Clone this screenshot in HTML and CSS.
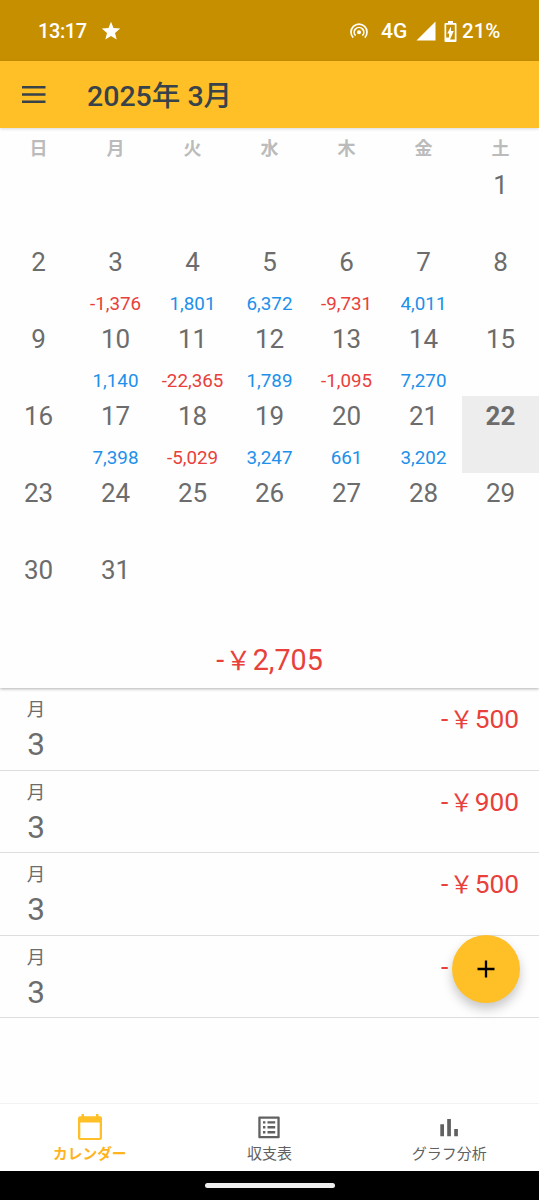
FILE: index.html
```html
<!DOCTYPE html>
<html lang="ja">
<head>
<meta charset="utf-8">
<title>カレンダー</title>
<link rel="stylesheet" href="styles.css">
</head>
<body>
<div class="app">
  <div class="status">
    <span class="clock">13:17</span>
    <svg class="star" viewBox="0 0 20 20"><path d="M10 .8l2.500 6.300 6.700.5-5.200 4.300 1.700 6.700-5.700-3.700-5.700 3.700L6 11.900.8 7.600l6.700-.5z"/></svg>
    <span class="spacer"></span>
    <svg class="hotspot" viewBox="0 0 18 16"><g fill="none" stroke="#fff" stroke-width="1.700"><path d="M3.200 14.600A8 8 0 1 1 14.800 14.600"/><path d="M5.600 12.700A4.800 4.800 0 1 1 12.400 12.700"/></g><circle cx="9" cy="9.200" r="2" fill="#fff"/></svg>
    <span class="network">4G</span>
    <svg class="signal" viewBox="0 0 20 20"><path d="M19.500.5v19H.5z"/></svg>
    <svg class="battery" viewBox="0 0 13 21"><path fill-rule="evenodd" d="M4 0h5v2h2.500q1 0 1 1v17q0 1-1 1h-10q-1 0-1-1V3q0-1 1-1H4zM2.200 3.800v12.700h2.800V12.500H3.200L7 5.500V10h2.800L6 18.500h4.800V3.800z"/></svg>
    <span class="percent">21%</span>
  </div>
  <header class="bar">
    <svg class="menu" viewBox="0 0 24 17"><path d="M0 1.300h23.500M0 8.500h23.500M0 15.700h23.500" stroke="#37424a" stroke-width="2.400"/></svg>
    <h1 class="title">2025年 3月</h1>
  </header>
  <main class="calendar">
    <div class="weekdays"><span>日</span><span>月</span><span>火</span><span>水</span><span>木</span><span>金</span><span>土</span></div>
    <div class="days">
      <div class="day"></div><div class="day"></div><div class="day"></div><div class="day"></div><div class="day"></div><div class="day"></div>
      <div class="day"><b>1</b></div>
      <div class="day"><b>2</b></div>
      <div class="day"><b>3</b><i class="minus">-1,376</i></div>
      <div class="day"><b>4</b><i>1,801</i></div>
      <div class="day"><b>5</b><i>6,372</i></div>
      <div class="day"><b>6</b><i class="minus">-9,731</i></div>
      <div class="day"><b>7</b><i>4,011</i></div>
      <div class="day"><b>8</b></div>
      <div class="day"><b>9</b></div>
      <div class="day"><b>10</b><i>1,140</i></div>
      <div class="day"><b>11</b><i class="minus">-22,365</i></div>
      <div class="day"><b>12</b><i>1,789</i></div>
      <div class="day"><b>13</b><i class="minus">-1,095</i></div>
      <div class="day"><b>14</b><i>7,270</i></div>
      <div class="day"><b>15</b></div>
      <div class="day"><b>16</b></div>
      <div class="day"><b>17</b><i>7,398</i></div>
      <div class="day"><b>18</b><i class="minus">-5,029</i></div>
      <div class="day"><b>19</b><i>3,247</i></div>
      <div class="day"><b>20</b><i>661</i></div>
      <div class="day"><b>21</b><i>3,202</i></div>
      <div class="day today"><b>22</b></div>
      <div class="day"><b>23</b></div>
      <div class="day"><b>24</b></div>
      <div class="day"><b>25</b></div>
      <div class="day"><b>26</b></div>
      <div class="day"><b>27</b></div>
      <div class="day"><b>28</b></div>
      <div class="day"><b>29</b></div>
      <div class="day"><b>30</b></div>
      <div class="day"><b>31</b></div>
    </div>
    <div class="total">-<span class="yen">￥</span>2,705</div>
  </main>
  <section class="list">
    <div class="entry"><div class="date"><span class="dow">月</span><span class="num">3</span></div><span class="amount">-<span class="yen">￥</span>500</span></div>
    <div class="entry"><div class="date"><span class="dow">月</span><span class="num">3</span></div><span class="amount">-<span class="yen">￥</span>900</span></div>
    <div class="entry"><div class="date"><span class="dow">月</span><span class="num">3</span></div><span class="amount">-<span class="yen">￥</span>500</span></div>
    <div class="entry"><div class="date"><span class="dow">月</span><span class="num">3</span></div><span class="amount covered">-</span></div>
  </section>
  <button class="fab" aria-label="追加"><svg viewBox="0 0 18 18"><path d="M9 .5v17M.5 9h17" stroke="#000" stroke-width="2.300"/></svg></button>
  <nav class="tabs">
    <div class="tab active">
      <svg class="tab-icon" viewBox="0 0 26 28"><path fill-rule="evenodd" d="M4.500 1h2.500v2.300h12V1h2.500v2.300H23q2 0 2 2V25q0 2-2 2H3q-2 0-2-2V5.300q0-2 2-2h1.500zM3.300 9.500V25h19.400V9.500z"/></svg>
      <span>カレンダー</span>
    </div>
    <div class="tab">
      <svg class="tab-icon" viewBox="0 0 26 28"><path fill-rule="evenodd" d="M3.300 3.500h19.400q1 0 1 1v19.700q0 1-1 1H3.300q-1 0-1-1V4.500q0-1 1-1zM4.600 5.800v17.100h16.800V5.800z"/><path d="M7 8.200h2.400v2.400H7zM7 13.100h2.400v2.400H7zM7 18h2.400v2.400H7zM11.500 8.200h7.700v2.400h-7.700zM11.500 13.100h7.700v2.400h-7.700zM11.500 18h7.700v2.400h-7.700z"/></svg>
      <span>収支表</span>
    </div>
    <div class="tab">
      <svg class="tab-icon" viewBox="0 0 26 28"><path d="M4.300 11.200H8v12H4.300zM11.200 6h3.700v17.200h-3.700zM18.200 16h3.700v7.200h-3.700z"/></svg>
      <span>グラフ分析</span>
    </div>
  </nav>
  <div class="system"><span class="handle"></span></div>
</div>
</body>
</html>
```
FILE: styles.css
```css
* { box-sizing: border-box; }
body { margin: 0; background: #fff; font-family: Roboto, "Noto Sans CJK JP", sans-serif; color: #6c6c6c; }
svg { display: block; flex: none; }
.app { position: relative; width: 539px; height: 1200px; display: flex; flex-direction: column; overflow: hidden; background: #fefefe; }

.status { height: 61px; flex: none; display: flex; align-items: center; padding: 1px 39px 0 38px; background: #c68f00; color: #fff; fill: #fff; font-size: 21px; line-height: 24px; font-weight: 500; }
.clock { width: 49px; font-size: 20px; letter-spacing: -.4px; }
.star { width: 20px; height: 20px; margin-left: 14px; }
.spacer { flex: 1; }
.hotspot { width: 18px; height: 16px; margin-right: 13px; }
.network { width: 28px; margin-right: 7px; }
.signal { width: 20px; height: 20px; margin-right: 8px; }
.battery { width: 13px; height: 21px; margin-right: 5px; }
.percent { width: 38px; font-size: 20.5px; }

.bar { position: relative; z-index: 1; height: 67px; flex: none; display: flex; align-items: center; padding: 0 22px 0; background: #ffbf26; box-shadow: 0 1px 3px rgba(0, 0, 0, .15); }
.menu { width: 24px; height: 17px; }
.title { margin: 5px 0 0 41px; font-size: 28.5px; line-height: 34px; font-weight: 500; color: #37424a; white-space: nowrap; }

.calendar { position: relative; height: 560px; flex: none; background: #fefefe; box-shadow: 0 1px 3px rgba(0, 0, 0, .3); }
.weekdays { display: grid; grid-template-columns: repeat(7, 77px); height: 37px; text-align: center; font-size: 18px; line-height: 42px; font-weight: 700; color: #bbb; }
.days { display: grid; grid-template-columns: repeat(7, 77px); grid-template-rows: repeat(6, 77px); height: 462px; }
.day { display: flex; flex-direction: column; align-items: center; }
.day b { height: 41px; font-size: 26px; line-height: 40px; font-weight: 400; }
.day i { height: 36px; font-size: 18.8px; line-height: 42px; font-style: normal; color: #2090ea; }
.day .minus, .total, .amount { color: #e8403a; }
.today { background: #ededed; }
.day.today b { font-weight: 700; }
.total { text-align: center; font-size: 28.7px; line-height: 61px; height: 61px; padding-top: 3px; }
.yen { display: inline-block; width: 1.11em; font-size: .9em; line-height: 1; text-align: center; }

.list { flex: 1; }
.entry { display: flex; justify-content: space-between; height: 82.6px; border-bottom: 1.5px solid #dedede; padding: 0 20px 0 16px; }
.date { display: flex; flex-direction: column; width: 40px; text-align: center; padding-top: 9px; }
.dow { font-size: 18.5px; line-height: 26px; }
.num { font-size: 31.5px; line-height: 44px; }
.amount { font-size: 26.3px; line-height: 36px; padding-top: 13px; }
.covered { width: 78px; }

.fab { position: absolute; left: 452px; top: 935px; width: 68px; height: 68px; border: 0; border-radius: 50%; padding: 0; display: flex; align-items: center; justify-content: center; background: #ffbf26; box-shadow: 0 6px 11px rgba(0, 0, 0, .22); }
.fab svg { width: 18px; height: 18px; }

.tabs { height: 68px; flex: none; display: grid; grid-template-columns: repeat(3, 1fr); border-top: 1px solid #f3f3f3; background: #fff; color: #616161; fill: #616161; font-size: 15px; line-height: 20px; }
.tab { display: flex; flex-direction: column; align-items: center; padding-top: 9px; }
.tab-icon { width: 26px; height: 28px; margin-bottom: 3px; }
.active { color: #ffb31c; fill: #ffbf26; font-weight: 700; font-size: 14.7px; }
.system { height: 29px; flex: none; display: flex; justify-content: center; padding-top: 12px; background: #000; }
.handle { width: 130px; height: 5px; border-radius: 3px; background: #eee; }
```
